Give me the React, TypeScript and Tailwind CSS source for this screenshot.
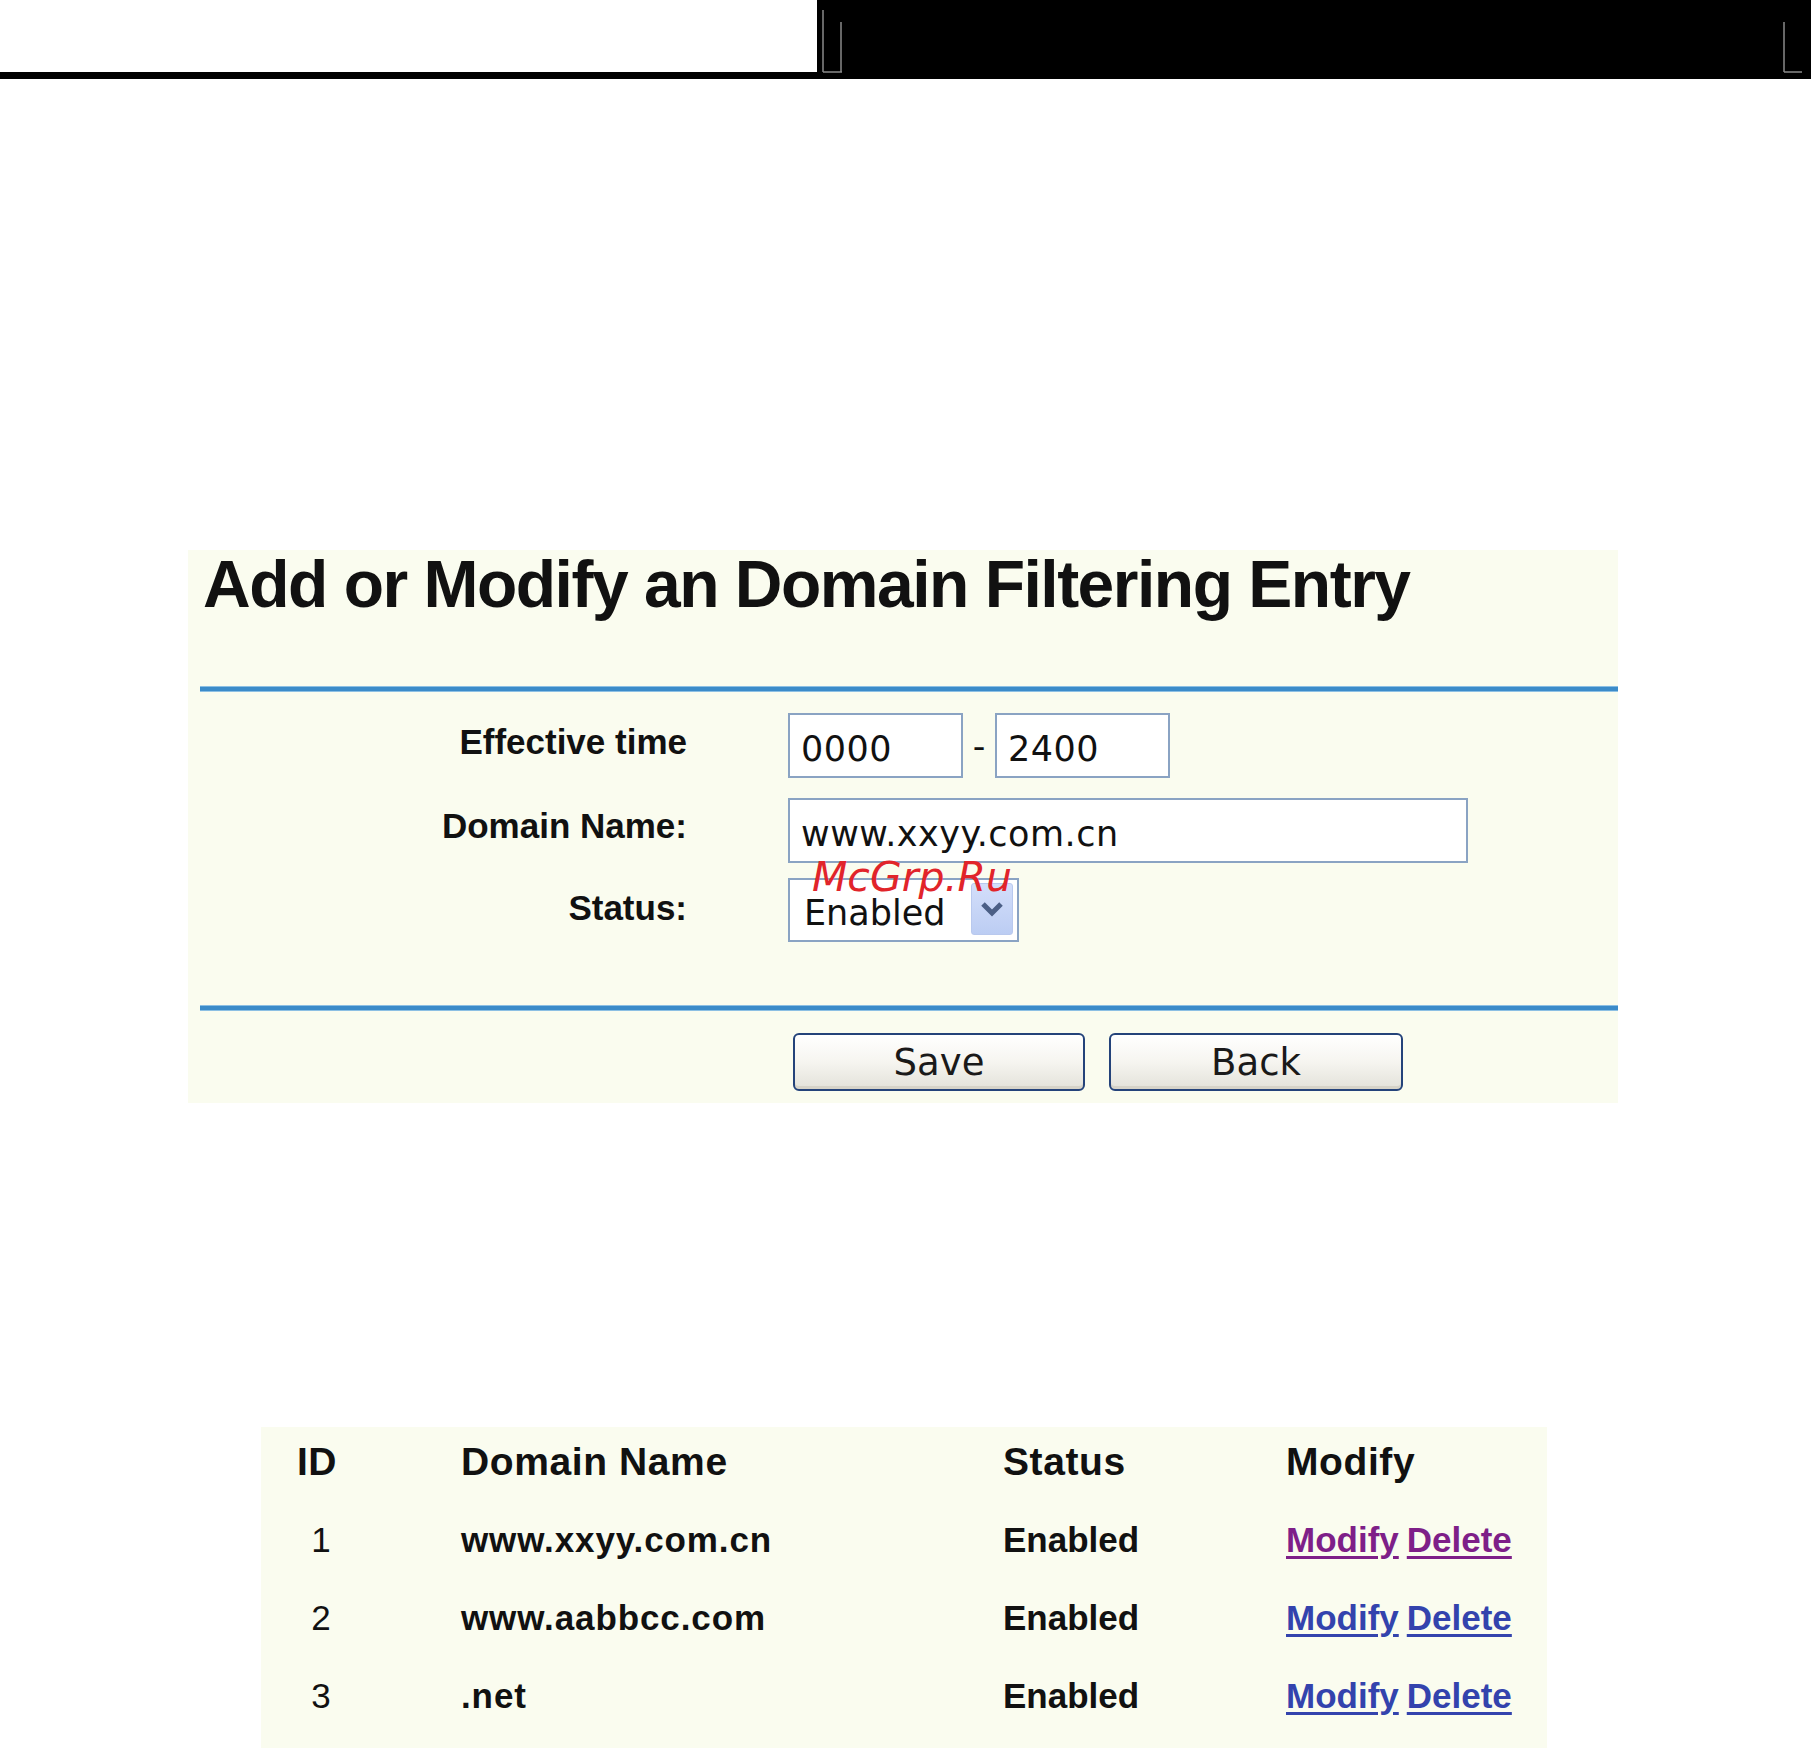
import React from 'react';

const sans = { fontFamily: '"Liberation Sans", Arial, sans-serif' };
const ui = { fontFamily: '"DejaVu Sans", Verdana, sans-serif' };

const rows = [
    { id: 1, domain: 'www.xxyy.com.cn', visited: true },
    { id: 2, domain: 'www.aabbcc.com', visited: false },
    { id: 3, domain: '.net', visited: false },
];

const BlueLine = () => (
    <div className="ml-[12px] h-[6px] border-y border-[#8cbfe3] bg-[#3b8bc9]" />
);

const Field = ({ width, children }: { width: string; children: React.ReactNode }) => (
    <div className={`${width} h-[65px] border-2 border-[#8aa3c3] bg-white pl-[11px] pt-[17px] text-[35px] leading-[35px] tracking-[0.5px] text-[#111]`} style={ui}>
        {children}
    </div>
);

const XpButton = ({ label }: { label: string }) => (
    <button
        className="h-[58px] rounded-[6px] border-2 border-[#24437a] bg-linear-to-b from-[#ffffff] via-[#f6f5f0] to-[#e3e2da] text-[37px] leading-[37px] text-[#1a1a1a] shadow-[inset_0_-3px_0_#d6d3c8]"
        style={ui}
    >
        {label}
    </button>
);

export default function App() {
    return (
        <div className="relative w-[1811px] h-[1748px] bg-white overflow-hidden" style={sans}>

            {/* Header strip */}
            <div className="flex h-[79px]">
                <div className="w-[817px] flex flex-col">
                    <div className="h-[72px] bg-white" />
                    <div className="h-[7px] bg-black" />
                </div>
                <div className="flex-1 bg-black">
                    <svg width="994" height="79" viewBox="0 0 994 79">
                        <g stroke="#8a8a8a" strokeWidth="1.5" fill="none">
                            <line x1="6" y1="10" x2="6" y2="72" />
                            <line x1="24" y1="22" x2="24" y2="72" />
                            <line x1="6" y1="72" x2="25" y2="72" />
                            <line x1="967" y1="22" x2="967" y2="72" />
                            <line x1="967" y1="72" x2="985" y2="72" />
                        </g>
                    </svg>
                </div>
            </div>

            {/* Add / modify panel */}
            <div className="ml-[188px] mt-[471px] w-[1430px] h-[553px] bg-[#fafcef] flex flex-col">
                <div className="h-[136px] pl-[15px] pt-[1px]">
                    <h1 className="text-[66px] leading-[66px] font-bold tracking-[-1.5px] text-[#111]">
                        Add or Modify an Domain Filtering Entry
                    </h1>
                </div>
                <BlueLine />

                <div className="mt-[21px] flex flex-col">
                    <div className="flex gap-[101px]">
                        <div className="w-[499px] pt-[11px] text-right text-[35px] leading-[35px] font-bold text-[#111]">Effective time</div>
                        <div className="flex items-start">
                            <Field width="w-[175px]">0000</Field>
                            <span className="w-[32px] pt-[16px] text-center text-[35px] leading-[35px] text-[#111]" style={ui}>-</span>
                            <Field width="w-[175px]">2400</Field>
                        </div>
                    </div>

                    <div className="mt-[20px] flex gap-[101px]">
                        <div className="w-[499px] pt-[10px] text-right text-[35px] leading-[35px] font-bold text-[#111]">Domain Name:</div>
                        <Field width="w-[680px]">www.xxyy.com.cn</Field>
                    </div>

                    <div className="mt-[15px] flex gap-[101px]">
                        <div className="w-[499px] pt-[12px] text-right text-[35px] leading-[35px] font-bold text-[#111]">Status:</div>
                        <div className="w-[231px] h-[64px] border-2 border-[#8aa3c3] bg-white flex items-start justify-between pl-[14px] pr-[4px] pt-[3px]">
                            <span className="pt-[13px] text-[35px] leading-[35px] text-[#111]" style={ui}>Enabled</span>
                            <div className="w-[42px] h-[52px] rounded-[3px] border border-[#b9c9ee] bg-linear-to-b from-[#d3defa] to-[#bccdf3] flex items-center justify-center">
                                <svg width="24" height="16" viewBox="0 0 24 16">
                                    <path d="M3 3 L12 12 L21 3" stroke="#4b5f86" strokeWidth="5" fill="none" strokeLinejoin="miter" />
                                </svg>
                            </div>
                        </div>
                    </div>
                </div>

                <div className="mt-[63px]">
                    <BlueLine />
                </div>

                <div className="mt-[22px] ml-[605px] flex gap-[24px]">
                    <div className="w-[292px] flex"><div className="flex-1 flex flex-col"><XpButton label="Save" /></div></div>
                    <div className="w-[294px] flex"><div className="flex-1 flex flex-col"><XpButton label="Back" /></div></div>
                </div>
            </div>

            {/* Entry list */}
            <div className="ml-[261px] mt-[324px] w-[1286px] h-[321px] bg-[#fafcef] pt-[15px]">
                <div className="grid grid-cols-[200px_542px_283px_1fr] h-[78px] text-[39px] leading-[39px] font-bold tracking-[0.6px] text-[#111]">
                    <div className="pl-[20px]"><div className="w-[72px] text-center">ID</div></div>
                    <div>Domain Name</div>
                    <div>Status</div>
                    <div>Modify</div>
                </div>
                {rows.map((r) => (
                    <div key={r.id} className="grid grid-cols-[200px_542px_283px_1fr] h-[78px] pt-[2px] text-[35px] leading-[35px] text-[#111]">
                        <div className="pl-[20px]"><div className="w-[72px] pl-[8px] text-center">{r.id}</div></div>
                        <div className="font-bold tracking-[0.9px]">{r.domain}</div>
                        <div className="font-bold">Enabled</div>
                        <div className={`flex gap-[8px] font-bold ${r.visited ? 'text-[#7e1f88]' : 'text-[#3343ad]'}`}>
                            <a className="underline decoration-[3px] underline-offset-[4px]">Modify</a>
                            <a className="underline decoration-[3px] underline-offset-[4px]">Delete</a>
                        </div>
                    </div>
                ))}
            </div>

            {/* Watermark */}
            <div className="absolute left-[812px] top-[857px] text-[41px] leading-[41px] italic text-[#e1242a]" style={ui}>
                McGrp.Ru
            </div>
        </div>
    );
}
